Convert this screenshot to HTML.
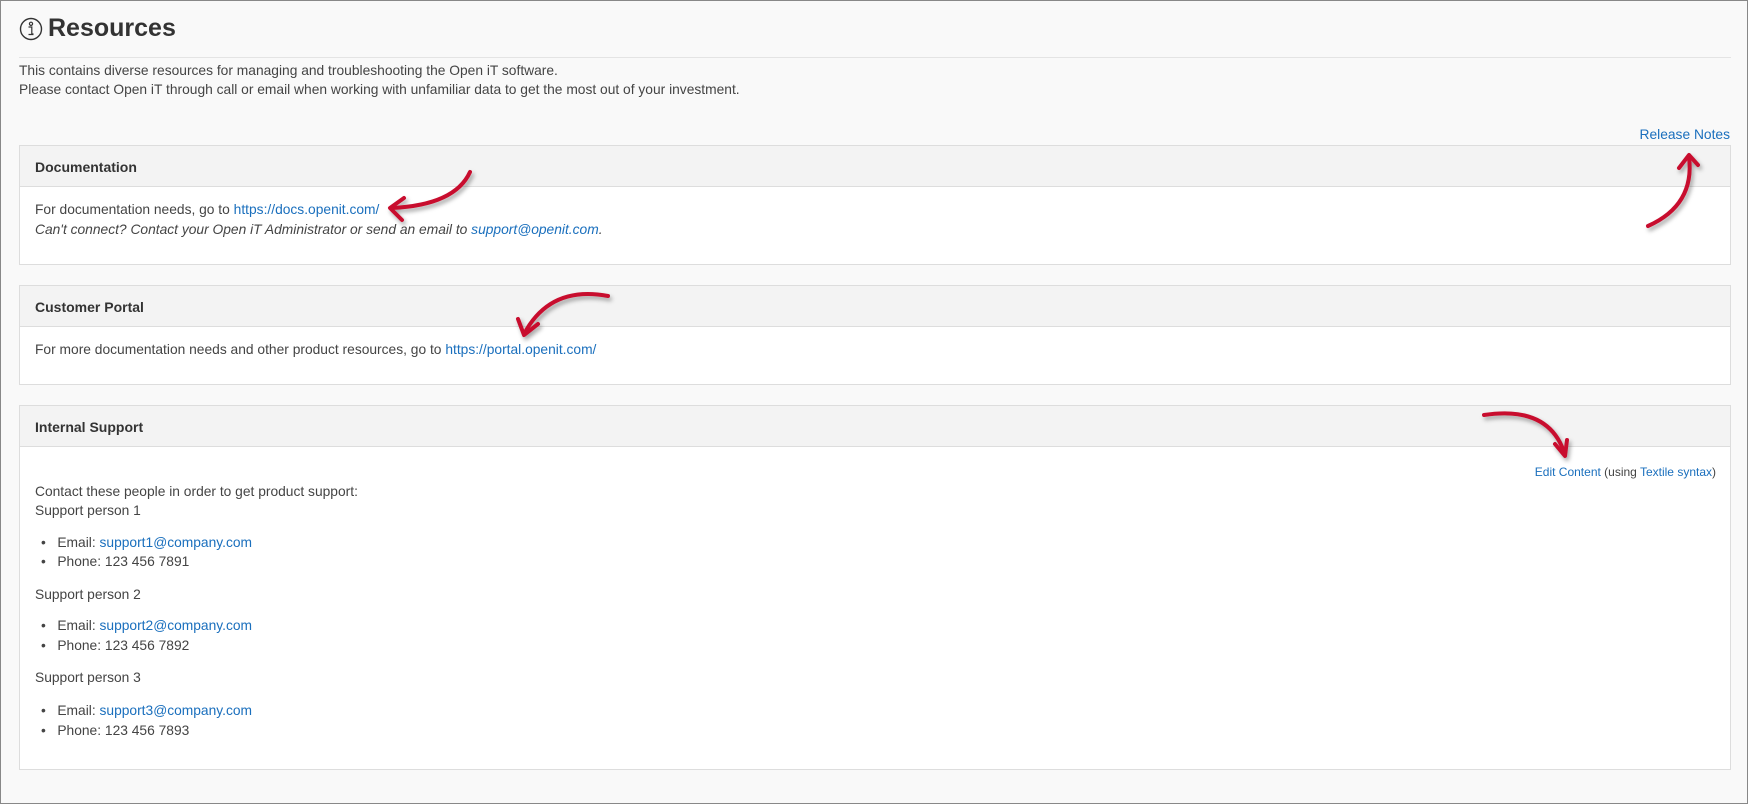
<!DOCTYPE html>
<html><head><meta charset="utf-8"><style>
*{box-sizing:border-box;margin:0;padding:0}
body{width:1748px;height:804px;background:#fff;font-family:"Liberation Sans",sans-serif;color:#444;font-size:13.8px;overflow:hidden;position:relative}
.frame{position:absolute;left:0;top:0;width:1748px;height:804px;border:1px solid #888;background:#f9f9f9}
a{color:#1a6fbd;text-decoration:none}
.t{position:absolute;white-space:nowrap}
.panel{position:absolute;left:19px;width:1712px;border:1px solid #ddd;background:#fff}
.ph{height:41px;background:#f3f3f3;border-bottom:1px solid #ddd;font-weight:bold;color:#333;font-size:14px;padding:13px 0 0 15px}
</style></head><body>
<div class="frame"></div>
<svg style="position:absolute;left:19px;top:17px" width="24" height="24" viewBox="0 0 24 24"><circle cx="12" cy="12" r="10.5" fill="none" stroke="#333" stroke-width="1.4"/><circle cx="12" cy="6.8" r="1.6" fill="none" stroke="#333" stroke-width="1.2"/><path d="M9.5 10h3.3v7h1.7M9.5 17.5h5" fill="none" stroke="#333" stroke-width="1.2"/></svg>
<div class="t" style="left:48px;top:14px;font-size:25px;font-weight:bold;color:#333">Resources</div>
<div style="position:absolute;left:19px;top:57px;width:1712px;height:1px;background:#e4e4e4"></div>
<div class="t" style="left:19px;top:63px">This contains diverse resources for managing and troubleshooting the Open iT software.</div>
<div class="t" style="left:19px;top:82px">Please contact Open iT through call or email when working with unfamiliar data to get the most out of your investment.</div>
<div class="t" style="right:18px;top:127px"><a>Release Notes</a></div>

<div class="panel" style="top:145px;height:120px"><div class="ph">Documentation</div>
<div class="t" style="left:15px;top:56px">For documentation needs, go to <a>https://docs.openit.com/</a></div>
<div class="t" style="left:15px;top:76px;font-style:italic">Can't connect? Contact your Open iT Administrator or send an email to <a>support@openit.com</a>.</div></div>

<div class="panel" style="top:285px;height:100px"><div class="ph">Customer Portal</div>
<div class="t" style="left:15px;top:56px">For more documentation needs and other product resources, go to <a>https://portal.openit.com/</a></div></div>

<div class="panel" style="top:405px;height:365px"><div class="ph">Internal Support</div>
<div class="t" style="right:14px;top:59px;font-size:12px"><a>Edit Content</a> (using <a>Textile syntax</a>)</div>
<div class="t" style="left:15px;top:78px">Contact these people in order to get product support:</div>
<div class="t" style="left:15px;top:97px">Support person 1</div>
<div class="t" style="left:21px;top:129px">•&nbsp;&nbsp;&nbsp;Email: <a>support1@company.com</a></div>
<div class="t" style="left:21px;top:148px">•&nbsp;&nbsp;&nbsp;Phone: 123 456 7891</div>
<div class="t" style="left:15px;top:181px">Support person 2</div>
<div class="t" style="left:21px;top:212px">•&nbsp;&nbsp;&nbsp;Email: <a>support2@company.com</a></div>
<div class="t" style="left:21px;top:232px">•&nbsp;&nbsp;&nbsp;Phone: 123 456 7892</div>
<div class="t" style="left:15px;top:264px">Support person 3</div>
<div class="t" style="left:21px;top:297px">•&nbsp;&nbsp;&nbsp;Email: <a>support3@company.com</a></div>
<div class="t" style="left:21px;top:317px">•&nbsp;&nbsp;&nbsp;Phone: 123 456 7893</div></div>

<svg style="position:absolute;left:0;top:0" width="1748" height="804">
<defs><filter id="s"><feDropShadow dx="2" dy="3" stdDeviation="2" flood-color="#000" flood-opacity="0.35"/></filter></defs>
<g fill="none" stroke="#c8102e" stroke-width="4" stroke-linecap="round" stroke-linejoin="round" filter="url(#s)">
<path d="M470 172 Q455 205 392 208"/><path d="M404 198 L390 208 L402 220"/>
<path d="M608 296 Q550 285 524 334"/><path d="M518 319 L524 335 L538 324"/>
<path d="M1648 226 Q1695 205 1689 157"/><path d="M1679 168 L1689 155 L1698 165"/>
<path d="M1484 415 Q1550 405 1565 455"/><path d="M1555 444 L1565 456 L1567 440"/>
</g></svg>
</body></html>
